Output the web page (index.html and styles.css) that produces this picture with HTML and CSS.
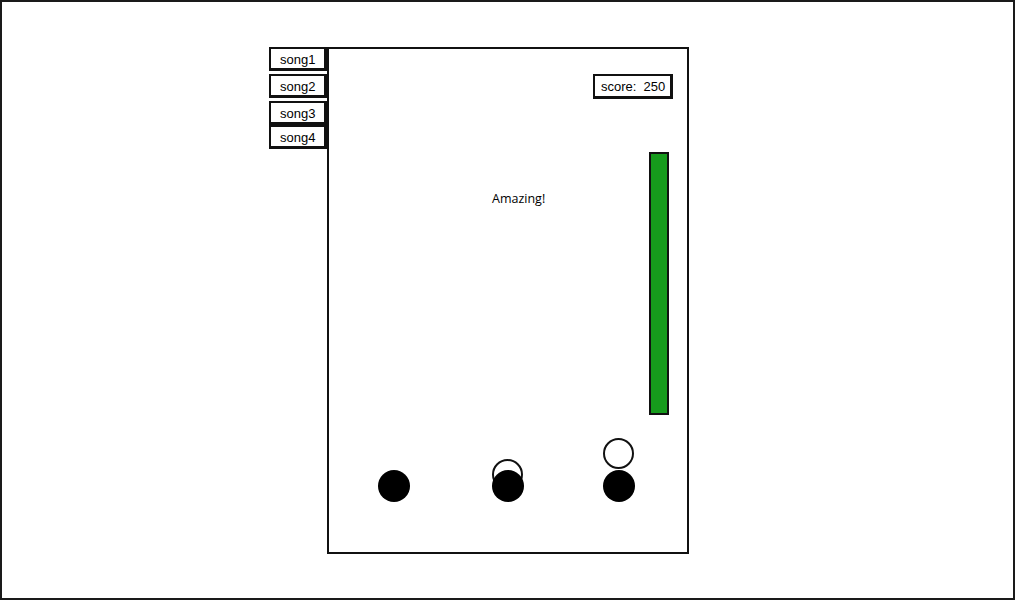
FILE: index.html
```html
<!DOCTYPE html>
<html>
<head>
<meta charset="utf-8">
<link rel="stylesheet" href="styles.css">
</head>
<body>
<div class="frame">
  <div class="songs">
    <div class="song s1">song1</div>
    <div class="song s2">song2</div>
    <div class="song s3">song3</div>
    <div class="song s4">song4</div>
  </div>
  <div class="panel">
    <div class="score-row">
      <div class="score">score:&nbsp; 250</div>
    </div>
    <div class="field">
      <div class="message">Amazing!</div>
      <div class="bar"></div>
    </div>
    <div class="note hit n1"></div>
    <div class="note hit n2"></div>
    <div class="note hit n3"></div>
    <div class="note falling f2"></div>
    <div class="note falling f3"></div>
  </div>
</div>
</body>
</html>
```
FILE: styles.css
```css
html, body {
  margin: 0;
  padding: 0;
  background: #fff;
}
.frame {
  box-sizing: border-box;
  width: 1015px;
  height: 600px;
  border: 2px solid #1a1a1a;
  display: flex;
  align-items: flex-start;
  padding: 45px 0 0 267px;
}
.songs {
  display: flex;
  flex-direction: column;
  width: 58px;
}
.song {
  box-sizing: border-box;
  height: 24px;
  border: 2px solid #111;
  border-right-width: 3px;
  border-bottom-width: 3px;
  font-family: "Liberation Sans", Arial, sans-serif;
  font-size: 13px;
  color: #000;
  display: flex;
  align-items: center;
  padding-left: 9px;
  padding-top: 1px;
  background: #fff;
}
.s2 { margin-top: 3px; }
.s3 { margin-top: 3px; }
.s4 { margin-top: 0; }
.panel {
  position: relative;
  box-sizing: border-box;
  width: 362px;
  height: 507px;
  border: 2px solid #111;
  display: flex;
  flex-direction: column;
}
.score-row {
  display: flex;
  justify-content: flex-end;
  padding: 25px 14px 0 0;
}
.score {
  box-sizing: border-box;
  width: 80px;
  height: 25px;
  border: 2px solid #111;
  border-right-width: 3px;
  border-bottom-width: 3px;
  font-family: "Liberation Sans", Arial, sans-serif;
  font-size: 13px;
  color: #000;
  display: flex;
  align-items: center;
  padding-left: 6px;
}
.field {
  display: flex;
  margin-top: 53px;
}
.message {
  flex: 1;
  font-family: "Open Sans", sans-serif;
  font-size: 12.5px;
  color: #000;
  padding: 38px 0 0 163px;
}
.bar {
  box-sizing: border-box;
  width: 20px;
  height: 263px;
  background: #169b1c;
  border: 2px solid #111;
  margin-right: 18px;
}
.note {
  position: absolute;
  box-sizing: border-box;
  border-radius: 50%;
}
.hit {
  width: 32px;
  height: 32px;
  background: #000;
  top: 421px;
  z-index: 1;
}
.n1 { left: 49px; }
.n2 { left: 163px; }
.n3 { left: 274px; }
.falling {
  width: 31px;
  height: 31px;
  border: 2px solid #111;
  background: transparent;
}
.f2 { left: 163px; top: 410px; }
.f3 { left: 274px; top: 389px; background: #fff; }
```
